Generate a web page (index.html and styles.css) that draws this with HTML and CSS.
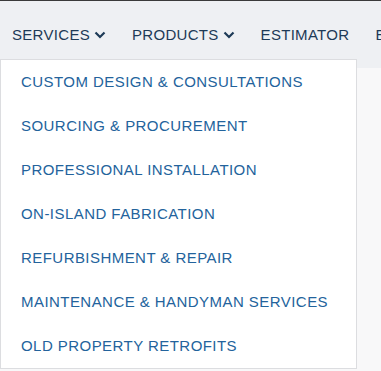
FILE: index.html
```html
<!DOCTYPE html>
<html lang="en">
<head>
  <meta charset="UTF-8" />
  <meta name="viewport" content="width=device-width, initial-scale=1.0" />
  <title>Services</title>
  <link rel="stylesheet" href="styles.css">
</head>
<body>
  <header class="site-header">
    <nav class="main-nav">
      <div class="nav-item has-menu">
        <a href="#" class="nav-link">SERVICES
          <svg class="chev" viewBox="0 0 12 8" width="12" height="8"><path d="M1.5 1.5 6 6l4.5-4.5" fill="none" stroke="currentColor" stroke-width="2.2"/></svg>
        </a>
        <!-- dropdown opened on hover -->
        <ul class="dropdown">
          <li><a href="#">CUSTOM DESIGN &amp; CONSULTATIONS</a></li>
          <li><a href="#">SOURCING &amp; PROCUREMENT</a></li>
          <li><a href="#">PROFESSIONAL INSTALLATION</a></li>
          <li><a href="#">ON-ISLAND FABRICATION</a></li>
          <li><a href="#">REFURBISHMENT &amp; REPAIR</a></li>
          <li><a href="#">MAINTENANCE &amp; HANDYMAN SERVICES</a></li>
          <li><a href="#">OLD PROPERTY RETROFITS</a></li>
        </ul>
      </div>
      <div class="nav-item">
        <a href="#" class="nav-link">PRODUCTS
          <svg class="chev" viewBox="0 0 12 8" width="12" height="8"><path d="M1.5 1.5 6 6l4.5-4.5" fill="none" stroke="currentColor" stroke-width="2.2"/></svg>
        </a>
      </div>
      <div class="nav-item">
        <a href="#" class="nav-link">ESTIMATOR</a>
      </div>
      <div class="nav-item">
        <a href="#" class="nav-link">EXPLORE</a>
      </div>
    </nav>
  </header>
  <main class="page">
    <h2 class="page-title">OUR SERVICES</h2>
  </main>
</body>
</html>
```

FILE: styles.css
```css
/* BASE */
* {
  margin: 0;
  padding: 0;
  box-sizing: border-box;
}
body {
  font-family: "Liberation Sans", Arial, sans-serif;
  background: #f8f8f9;
  color: #1d3a57;
  overflow: hidden;
}
a {
  text-decoration: none;
  color: inherit;
}
ul {
  list-style: none;
}
/* HEADER / NAV */
.site-header {
  background: #eef0f3;
  border-top: 1px solid #3a3a3a;
  height: 68px;
}
.main-nav {
  display: flex;
  gap: 26px;
  padding: 0 12px;
  height: 67px;
  align-items: center;
  white-space: nowrap;
}
.nav-item {
  position: relative;
}
.nav-link {
  display: flex;
  align-items: center;
  gap: 4px;
  font-size: 15px;
  letter-spacing: 0.3px;
  color: #1d3a57;
  line-height: 20px;
}
.chev {
  margin-top: 1px;
}
/* DROPDOWN */
.dropdown {
  position: absolute;
  top: 34px;
  left: -12px;
  width: 357px;
  background: #fff;
  border: 1px solid #dcdde0;
  z-index: 10;
}
.dropdown li a {
  display: block;
  padding: 0 20px;
  font-size: 15px;
  letter-spacing: 0.45px;
  line-height: 44px;
  color: #23639c;
}
/* PAGE CONTENT */
.page {
  padding: 297px 0 0 0;
}
.page-title {
  font-size: 40px;
  color: #1d3a57;
  line-height: 1;
}
```
